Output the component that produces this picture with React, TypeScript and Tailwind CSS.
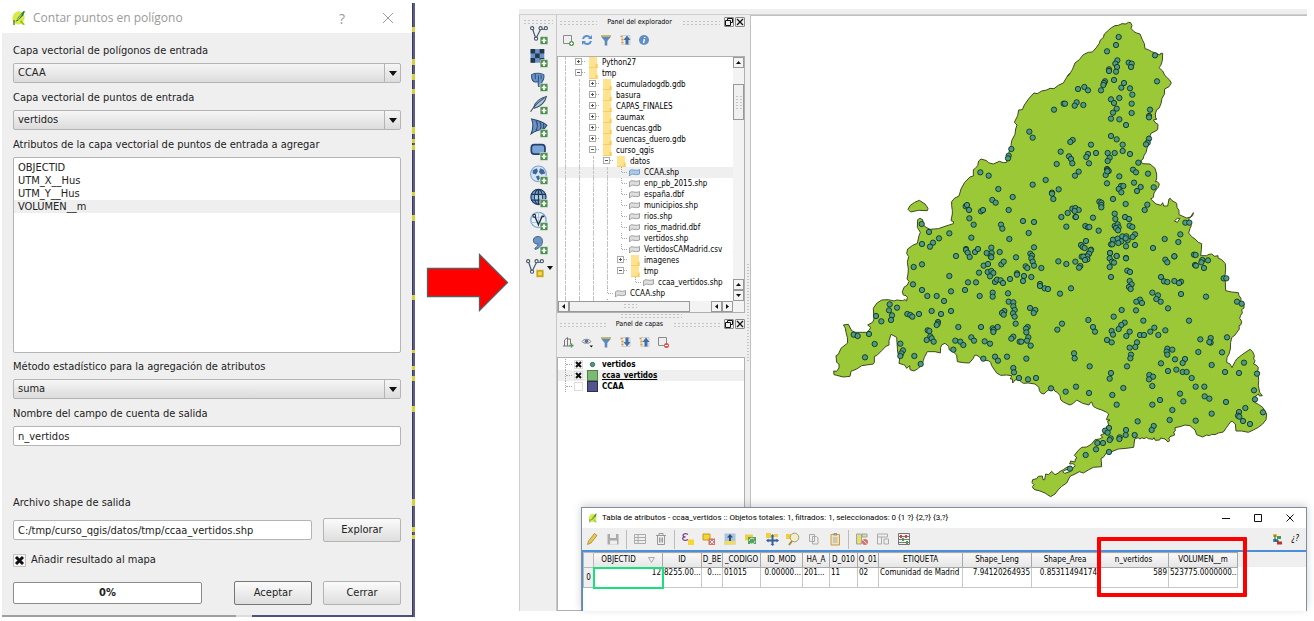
import React from "react";

const UI = "font-['DejaVu_Sans_Condensed','DejaVu_Sans',sans-serif]";

/* ---------- Map data (units of a third of a pixel, one sheet per quadrant) ---------- */

const OUTLINE: { x: number; y: number; pts: string }[] = [
  {
    x: 630,
    y: 0,
    pts: "0,246 12,243 20,244 35,240 55,230 72,220 82,203 92,190 97,182 105,162 118,152 130,137 145,130 157,129 168,117 178,103 181,93 190,86 193,75 205,64 214,56 225,50 235,49 246,44 258,45 265,40 272,41 276,50 273,58 282,68 290,72 300,75 307,92 313,104 315,119 325,122 335,128 350,134 360,138 362,133 368,133 367,155 362,170 357,176 368,186 375,200 388,212 394,222 387,233 374,240 373,256 366,268 363,284 357,298 350,302 346,315 347,328 351,330 340,333 347,342 354,346 353,362 345,367 334,372 328,385 329,397 322,415 318,430 312,440 309,450 303,455 307,464 330,465 345,478 350,495 350,510 346,518 352,518 358,525 355,535 350,540 342,552 340,565 332,570 348,585 363,589 368,581 371,591 383,591 387,570 391,568 395,574 410,583 411,595 417,605 417,617 440,627 452,624 460,611 458,620 446,629 448,640 454,650 450,658 446,672 455,683 465,690 475,700 485,704 484,722 482,740 500,740 507,736",
  },
  {
    x: 630,
    y: 720,
    pts: "515,15 524,22 534,20 534,27 545,32 556,44 557,60 555,80 557,125 575,129 595,131 597,140 603,148 602,160 612,165 612,177 605,182 607,192 602,199 599,208 605,217 603,227 597,230 598,240 585,258 575,266 572,280 571,300 567,315 561,325 560,340 570,345 576,356 585,338 590,330 605,318 615,311 630,301 638,308 643,320 641,330 645,335 641,345 648,348 655,355 653,368 659,370 655,380 656,395 655,410 659,430 667,440 658,441 655,435 645,443 639,457 655,466 668,475 675,487 680,495 678,512 668,525 655,535 640,543 625,550 605,546 588,546 586,525 577,517 572,518 560,535 550,549 535,552 525,557 515,556 508,560 500,558 488,564 470,557 465,543 458,537 450,530 435,528 420,533 405,536 406,545 401,549 404,558 390,563 386,570 390,574 384,579 375,570 362,567 359,573 346,574 342,566 339,571 325,569 320,565 312,569 306,566 300,570 294,566 284,570 281,595 258,598 235,600 215,608 200,610 190,625 183,628 184,638 185,653 160,655 145,663 130,672 118,668 105,675 90,682 80,702 65,712 55,722 45,735 32,743 22,737 15,732 0,726",
  },
  {
    x: 0,
    y: 720,
    pts: "618,723 611,720 607,713 612,707 606,701 608,692 620,689 625,682 637,681 639,692 644,692 647,675 656,677 665,667 675,677 686,672",
  },
  {
    x: 630,
    y: 720,
    pts: "57,669 70,662 83,653 92,652 94,658 86,662 78,662 68,668 74,673 90,668 98,657 106,650 99,644 89,645 92,636 105,639 106,630 111,627 103,619 115,604 125,595 140,594 155,585 165,572 178,570 188,565 182,558 195,553 202,545 198,536 206,529 203,516 210,513 199,512 206,495 200,490 185,483 170,478 160,472 155,459 150,462 147,468 128,463 110,453 100,463 90,468 80,464 70,459 62,452 60,440 52,430 45,427 40,419 30,420 20,427 12,435 4,433",
  },
  {
    x: 0,
    y: 720,
    pts: "628,425 627,415 615,405 595,402 580,403 565,392 555,393 548,402 547,390 541,390 545,380 530,378 512,379 500,372 485,350 482,340 475,335 455,333 448,323 438,318 433,320 430,328 418,342 400,341 382,338 380,318 370,309 358,303 356,292 345,283 336,287 332,295 331,312 315,308 292,308 283,325 280,335 274,350 262,360 252,366 240,362 239,350 230,358 225,349 220,347 207,343 209,327 203,310 200,265 183,256 177,275 177,288 168,292 155,305 140,320 133,322 133,340 130,345 95,350 80,360 63,367 60,382 40,384 20,379 12,377 11,366 20,367 27,357 27,345 20,340 18,320 25,316 33,298 53,282 52,265 48,250 46,237 40,228 55,226 65,245 75,250 110,250 118,243 122,235 113,228 128,220 132,210 130,178 140,163 155,153 175,152 192,156 200,153 217,155 225,152 230,156 232,145 228,140 220,138 217,128 222,115 232,108 237,97 231,90 234,75 235,60 232,40 236,22",
  },
  {
    x: 0,
    y: 0,
    pts: "234,740 230,733 233,720 248,709 262,703 267,680 271,670 262,655 263,632 270,628 278,632 280,648 288,655 300,661 325,659 345,652 370,644 371,638 363,635 367,615 367,605 365,590 365,578 373,568 387,561 393,540 404,520 420,504 430,501 430,482 436,478 443,470 446,456 453,450 470,455 475,461 490,465 508,457 520,461 530,460 537,430 543,410 545,395 555,376 557,360 561,348 553,340 563,320 566,303 577,302 583,288 597,268 612,252 622,254 635,246 650,243 660,238 672,239 685,229 700,222 710,205 720,192 630,246",
  },
];

// The last sheet ends on the northern ridge, which the first one already traces.
const outlinePath =
  "M" +
  OUTLINE.map((s, i) => {
    const list = s.pts.split(" ");
    const used = i === 0 ? list.slice(6) : i === OUTLINE.length - 1 ? list.slice(0, -1) : list;
    return used
      .map((p) => {
        const [x, y] = p.split(",").map(Number);
        return `${x + s.x},${y + s.y}`;
      })
      .join(" L");
  }).join(" L") +
  "Z";

const POINTS: { x: number; y: number; pts: string }[] = [
  {
    x: 0,
    y: 0,
    pts: "598,368 608,386 544,420 536,440 534,448 451,490 476,500 505,540 548,564 487,573 497,581 407,592 411,588 417,603 453,607 459,603 536,603 418,628 431,647 275,645 297,669 276,705 309,701 300,713 327,688 358,673 424,686 513,647 517,659 538,690 579,636 612,639 608,527 596,672 612,715 408,720 408,723 413,731 419,744 435,729 444,720 484,716 470,732 485,732 482,742 509,729 378,741 558,745 601,734 606,740",
  },
  {
    x: 0,
    y: 720,
    pts: "251,54 276,46 358,81 461,50 474,45 514,46 521,38 604,28 608,38 612,50 587,52 592,57 484,25 447,71 473,69 484,66 490,72 480,82 414,100 438,100 495,99 501,92 512,94 519,102 540,90 561,73 561,77 582,81 579,96 604,84 249,106 276,123 292,141 320,141 342,156 363,127 405,123 449,141 488,131 488,143 534,133 179,166 201,176 177,184 186,199 183,213 138,201 154,217 232,195 241,198 247,203 267,195 305,186 333,195 363,186 536,158 550,160 550,172 554,183 549,193 554,203 523,186 516,192 521,197 600,177 616,183 611,192 557,224 324,219 323,224 320,228 385,234 453,234 488,238 491,243 490,249 503,234 293,244 298,246 71,257 83,261 117,255 134,285 105,325 301,262 305,268 290,273 311,278 211,284 219,304 214,313 211,321 253,321 272,345 376,275 391,278 400,288 370,302 424,265 432,275 464,277 480,284 550,263 544,269 593,234 588,239 589,250 595,265 591,275 569,278 574,278 602,290 460,329 495,323 504,335 531,323 589,329 550,357 552,370 567,387 594,391 618,387",
  },
  {
    x: 630,
    y: 0,
    pts: "236,84 228,108 201,127 345,139 232,154 226,164 231,174 266,161 275,164 273,174 207,181 207,186 228,188 351,217 222,213 195,217 192,222 190,228 183,244 252,222 244,236 270,238 133,234 144,244 114,240 277,257 238,267 213,271 222,282 275,284 110,280 104,290 130,288 71,284 75,284 42,302 230,299 219,311 275,312 213,329 238,331 330,302 327,321 327,325 258,348 213,381 230,391 327,389 323,401 318,406 248,407 248,426 270,435 98,393 91,399 153,407 168,432 144,435 139,444 147,463 62,428 87,442 93,450 97,463 50,465 116,488 105,500 203,432 224,432 209,446 203,456 295,461 201,480 203,483 206,486 197,498 202,487 279,482 288,490 324,494 238,502 201,523 282,521 302,534 291,546 341,535 243,531 250,531 236,540 244,550 219,570 257,585 17,513 56,541 36,551 36,554 40,570 178,578 184,581 184,588 184,595 322,587 314,603 97,599 106,597 116,603 104,606 83,612 64,624 106,624 108,624 159,626 224,614 226,630 255,624 267,630 136,651 144,655 148,654 79,653 176,665 224,651 233,646 236,655 228,657 234,664 269,650 277,654 436,641 448,641 421,676 415,699 374,690 339,717 285,676 278,684 285,708 138,696 123,708 128,714 134,717 153,722 147,733 219,692 233,689 247,682 259,682 263,694 244,697 235,702 213,706 217,706 258,712 257,688 210,732 230,741 258,747 125,743 135,743 403,742 462,737 467,738",
  },
  {
    x: 630,
    y: 720,
    pts: "152,4 147,14 142,22 142,31 130,23 135,33 106,38 121,51 117,56 55,37 79,45 4,57 0,105 0,111 14,118 24,120 60,134 93,118 210,12 209,28 230,21 216,38 222,41 209,54 258,28 262,65 270,69 213,84 269,96 275,106 267,114 272,120 376,32 382,40 403,22 487,33 484,40 504,34 465,48 468,50 492,57 551,88 559,88 363,84 372,97 382,99 403,96 423,98 417,102 423,135 498,143 591,158 605,164 337,131 354,139 349,150 362,158 384,178 300,152 289,158 306,162 288,184 245,183 221,203 310,215 447,215 145,213 66,224 52,242 159,234 165,248 254,221 244,228 236,240 215,246 219,257 201,273 215,280 269,248 259,261 343,236 331,248 376,244 355,258 300,258 312,258 291,280 286,294 269,296 273,317 271,328 261,352 512,267 512,281 508,279 481,271 561,265 546,310 475,309 382,299 397,302 380,308 382,317 405,331 435,330 428,342 363,343 515,348 409,362 384,366 428,369 440,369 455,387 612,341 597,372 555,369 651,374 642,424 645,451 669,490 102,313 104,328 149,352 213,372 209,389 33,418 77,428 108,413 147,432 250,417 217,438 230,467 328,378 339,383 327,391 337,411 360,453 337,467 420,434 430,457 397,483 389,513 467,413 493,413 494,442 508,449 558,459 515,494 467,515 597,489 594,500 598,503 616,477 609,516 630,525 293,517 341,531 335,543 258,543 257,558 284,558 207,537 195,545 203,551 212,568 209,573 239,565 238,570 172,582 189,582 168,601 207,609 137,618 90,659",
  },
];

function MapCanvas() {
  return (
    <svg viewBox="-237 21 1668 1782" className="block h-auto w-full" role="img" aria-label="Mapa de vertidos">
      <g fill="#9ac837" stroke="#3a4a22" strokeWidth="3" strokeLinejoin="round">
        <path d={outlinePath} />
        <path d="M234,601 L240,590 254,580 268,574 285,585 294,598 292,605 265,604 242,609Z" />
        <path d="M1033,636 L1042,628 1050,628 1042,640Z" fill="#fff" />
      </g>
      <g fill="#4b9b86" stroke="#12301f" strokeWidth="2.6">
        {POINTS.map((s) =>
          s.pts.split(" ").map((p) => {
            const [x, y] = p.split(",").map(Number);
            return <circle key={`${s.x}-${s.y}-${p}`} cx={x + s.x} cy={y + s.y} r="8" />;
          })
        )}
      </g>
    </svg>
  );
}

/* ---------- Icons ---------- */

function QgisLogo({ className }: { className: string }) {
  return (
    <svg viewBox="0 0 16 16" className={className} aria-hidden="true">
      <ellipse cx="7.5" cy="8" rx="6" ry="6.6" fill="#dbe84a" transform="rotate(20 8 8)" />
      <path d="M10 10l4 4.5-2 .5-3-3z" fill="#8fc31f" />
      <path d="M4.500 12l2.500-4.500L12.500 1l1.500.3-1.700 4-5 5z" fill="#2f7d32" />
      <path d="M6.500 10l4-5.500" stroke="#dcf0c0" strokeWidth="0.8" />
      <path d="M3 10v5" stroke="#4a6d20" strokeWidth="1.300" />
    </svg>
  );
}

function Badge({ yellow }: { yellow?: boolean }) {
  return (
    <g>
      <rect x="10" y="11" width="7.500" height="7.500" rx="1" fill={yellow ? "#c9a516" : "#4e8f4e"} stroke="#f4f4f4" strokeWidth=".6" />
      {yellow ? <rect x="12" y="13" width="3.500" height="3.500" fill="#f0d75a" /> : <path d="M13.750 12.500v4.500M11.500 14.750h4.500" stroke="#fff" strokeWidth="1.600" />}
    </g>
  );
}

const vee = (
  <g fill="none" stroke="#44566c" strokeWidth="1.1">
    <path d="M3 4l3 9 4.5-9h4" />
    <g fill="#fff">
      <circle cx="2.5" cy="3" r="1.5" />
      <circle cx="6.2" cy="13" r="1.5" />
      <circle cx="10.5" cy="3" r="1.5" />
      <circle cx="15.5" cy="3" r="1.5" />
    </g>
  </g>
);

const sideIcons: { label: string; art: React.ReactNode; last?: boolean }[] = [
  { label: "Añadir capa vectorial", art: vee },
  {
    label: "Añadir capa ráster",
    art: (
      <g>
        <rect x="1" y="1" width="13" height="13" fill="#6b93c6" />
        <path d="M1 1h4.3v4.3H1zM9.6 1H14v4.3H9.6zM5.3 5.3h4.3v4.3H5.3zM1 9.6h4.3V14H1zM9.6 9.6H14V14H9.6z" fill="#22384f" />
      </g>
    ),
  },
  {
    label: "Añadir capa PostGIS",
    art: (
      <g fill="#6b93c6" stroke="#31547d" strokeWidth="1">
        <path d="M2 2.5c3-1.5 8-1.500 11.500 0 .5 2.500 0 5-1.500 6.500l-1 5-2.500-.5-.5-4.500-1.500.5C4 10 1.500 8 2 2.500z" />
        <path d="M5.500 2v5M8.500 3v6M11 3v4" fill="none" />
      </g>
    ),
  },
  {
    label: "Añadir capa SpatiaLite",
    art: (
      <g fill="#a9c8ea" stroke="#3d4f63" strokeWidth="1">
        <path d="M4 12C5 7 10 3 16 1.500 15 6 11 11 4.500 12.500z" />
        <path d="M1 16C4 11 9 6 14 3" fill="none" />
      </g>
    ),
  },
  {
    label: "Añadir capa MSSQL",
    art: (
      <g fill="#6b93c6" stroke="#2b476a" strokeWidth="1">
        <path d="M2 1c5 1 11 2.500 14.500 6l-3 4C10 11 6 12 1.500 15 3.500 10 4 6 2 1z" />
        <path d="M6 2.500c2 3 1.500 7 0 9.500M9.500 3.500c2 3 1.500 5.500.5 7.500M13 5c1 2 .8 4-.3 6" fill="none" />
      </g>
    ),
  },
  {
    label: "Añadir capa Oracle",
    art: <rect x="1.700" y="3.500" width="13" height="9" rx="3" fill="#7da4d6" stroke="#22426b" strokeWidth="1.600" />,
  },
  {
    label: "Añadir capa WMS",
    art: (
      <g>
        <circle cx="8.500" cy="8.500" r="7.500" fill="#d5e5f6" stroke="#7fa5cf" />
        <path d="M3 5l4-2 1 3-2 3-3-1zM10 3l3.500 1.500L15 8l-4 1-2-2zM6 11l3-1 1 3-2 2z" fill="#3f6796" />
      </g>
    ),
  },
  {
    label: "Añadir capa WCS",
    art: (
      <g>
        <circle cx="8.500" cy="8.500" r="7.200" fill="#7da4d6" stroke="#22426b" strokeWidth="1.200" />
        <path d="M1.500 6h14M1.500 11.500h14M8.500 1.500v14" stroke="#22384f" strokeWidth="1.300" />
        <ellipse cx="8.500" cy="8.500" rx="3.700" ry="7" fill="none" stroke="#22384f" />
        <path d="M5.200 6.800h2.600v3.800H5.200zM9.200 6.800h2.600v3.800H9.200z" fill="#b6d0ee" />
      </g>
    ),
  },
  {
    label: "Añadir capa WFS",
    art: (
      <g>
        <circle cx="8.500" cy="8.500" r="7.300" fill="#eaf2fb" stroke="#7fa5cf" strokeWidth="1.200" />
        <path d="M1.500 6h14M1.500 11h14M8.500 1v15" stroke="#a9c4e4" />
        <path d="M5 5l3.500 8L12 5h2" fill="none" stroke="#1f2c3a" strokeWidth="1.300" />
        <circle cx="4.500" cy="4.500" r="1.300" fill="#fff" stroke="#1f2c3a" />
      </g>
    ),
  },
  {
    label: "Añadir texto delimitado",
    art: <path d="M7 1.500c3.500-.5 5.500 1.500 5.300 5C12 10 9.500 12.500 5.500 13.800L5 12.500c2-1 3-2.300 3-4C5.500 9 3.500 7.500 3.700 5 3.800 3 5 1.800 7 1.500z" fill="#6b93c6" stroke="#31547d" strokeWidth=".8" />,
  },
  { label: "Nueva capa shape", art: vee, last: true },
];

const Funnel = () => (
  <svg viewBox="0 0 12 12" className="size-3">
    <path d="M1 2.500h10L7.300 7v4.500H4.700V7z" fill="#5b89bd" />
    <path d="M1 1.200h10v1.500H1z" fill="#b9ae4c" />
  </svg>
);
const SquareBadge = ({ tone }: { tone: string }) => (
  <svg viewBox="0 0 12 12" className="size-3" fill="none">
    <path d="M8 9.500H1.500v-8h8V8" stroke="#8a8a8a" />
    <circle cx="9.500" cy="9.500" r="2.500" fill={tone} />
    <path d={tone === "#d9534f" ? "M8 9.500h3" : "M8 9.500h3M9.500 8v3"} stroke="#fff" />
  </svg>
);
const Expand = ({ down }: { down?: boolean }) => (
  <svg viewBox="0 0 12 12" className="size-3" fill="none">
    <path d="M3 1.500h8v9H3z" fill="#ececec" stroke="#bbb" strokeWidth=".6" />
    <path d="M1.500 2.500h2M2.500 5.500h2M2.500 8.500h2" stroke="#e09a2b" strokeWidth="1.700" />
    <path d={down ? "M6.500 1.500h3V6H11.500L8 10.500 4.500 6h2z" : "M6.500 10.500h3V6h2L8 1.500 4.500 6h2z"} fill="#3f6fa8" />
  </svg>
);
const Refresh = () => (
  <svg viewBox="0 0 12 12" className="size-3" fill="none" stroke="#5b8fd0" strokeWidth="2">
    <path d="M2 5a4 4 0 0 1 7-1.500M10 7a4 4 0 0 1-7 1.500" />
    <path d="M11 1v4H7zM1 11V7h4z" fill="#5b8fd0" stroke="none" />
  </svg>
);
const Info = () => (
  <svg viewBox="0 0 12 12" className="size-3">
    <circle cx="6" cy="6" r="5" fill="#5f8ec4" />
    <path d="M6.500 5L5.500 9M6.700 3v1" stroke="#fff" strokeWidth="1.400" />
  </svg>
);
const AddGroup = () => (
  <svg viewBox="0 0 12 12" className="size-3" fill="none" stroke="#777">
    <path d="M2.500 10V4l3-2.500V10M5.500 3h3v5M1 10h7" />
    <path d="M9.500 7.500v4M7.500 9.500h4" stroke="#4e9a4e" strokeWidth="1.500" />
  </svg>
);
const Eye = () => (
  <svg viewBox="0 0 12 12" className="size-3" fill="none">
    <path d="M1 5.500C3 2.500 8 2.500 10 5.500 8 8 3 8 1 5.500z" stroke="#888" />
    <circle cx="5.500" cy="5.300" r="1.800" fill="#4b6f9c" />
    <path d="M8.500 9.500h3.500l-1.700 2z" fill="#111" />
  </svg>
);

/* ---------- Left dialog ---------- */

const FIELD = "h-5 w-full rounded-[2px] border border-[#b4b4b4] pl-1 text-[11px] text-[#222]";

function Combo({ id, label, value }: { id: string; label: string; value: string }) {
  return (
    <div className="mb-[5px]">
      <label htmlFor={id} className="mb-[2px] block h-5 leading-5">{label}</label>
      <div className="relative">
        <select id={id} defaultValue={value} className={`${FIELD} block appearance-none bg-linear-to-b from-[#f6f6f6] to-[#dcdcdc]`}>
          <option>{value}</option>
        </select>
        <span className="pointer-events-none absolute inset-y-px right-px flex w-4 items-center justify-center border-l border-[#b4b4b4]">
          <svg viewBox="0 0 8 5" className="h-[5px] w-2"><path d="M0 0h8L4 5z" fill="#111" /></svg>
        </span>
      </div>
    </div>
  );
}

const BTN = "h-[24px] rounded-[2px] border bg-linear-to-b from-[#fbfbfb] to-[#dedede] text-[11px] text-[#222]";

const MARKS: [number, number][] = [
  [24, 5], [56, 6], [71, 6], [86, 5], [124, 7], [136, 4], [142, 5], [189, 4], [212, 6], [292, 5],
  [347, 3], [363, 4], [373, 5], [403, 6], [496, 7], [524, 5], [532, 4],
];

function CountDialog() {
  return (
    <div className={`mt-[3px] flex items-stretch ${UI} text-[11px] text-[#222]`}>
      <section className="min-w-0 flex-1 bg-[#efefef]" aria-label="Contar puntos en polígono">
        <header className="flex h-[30px] items-center bg-white pr-[18px] pl-[9px] text-[#9a9a9a]">
          <QgisLogo className="size-4" />
          <h1 className="ml-[6px] flex-1 font-['Open_Sans',sans-serif] text-[12px]">Contar puntos en polígono</h1>
          <button aria-label="Ayuda" className="mr-[37px] font-['Open_Sans',sans-serif] text-[14px]">?</button>
          <button aria-label="Cerrar ventana">
            <svg viewBox="0 0 12 12" className="size-3"><path d="M1 1l10 10M11 1L1 11" stroke="#9a9a9a" /></svg>
          </button>
        </header>
        <form className="px-[11px] pt-2 pb-[10px]" onSubmit={(e) => e.preventDefault()}>
          <Combo id="poly" label="Capa vectorial de polígonos de entrada" value="CCAA" />
          <Combo id="pts" label="Capa vectorial de puntos de entrada" value="vertidos" />
          <p id="attrs" className="mb-[2px] h-5 leading-5">Atributos de la capa vectorial de puntos de entrada a agregar</p>
          <ul role="listbox" aria-labelledby="attrs" className="mb-1 h-[196px] rounded-[2px] border border-[#b4b4b4] bg-white pt-[3px] leading-[13px]">
            {["OBJECTID", "UTM_X__Hus", "UTM_Y__Hus", "VOLUMEN__m"].map((a, i) => (
              <li key={a} role="option" aria-selected={i === 3} className={i === 3 ? "bg-[#efefef] pl-1" : "pl-1"}>{a}</li>
            ))}
          </ul>
          <Combo id="method" label="Método estadístico para la agregación de atributos" value="suma" />
          <label htmlFor="count" className="mb-[2px] block h-5 leading-5">Nombre del campo de cuenta de salida</label>
          <input id="count" defaultValue="n_vertidos" className={`${FIELD} block bg-white`} />
          <label htmlFor="out" className="mt-[47px] mb-[5px] block h-5 leading-5">Archivo shape de salida</label>
          <div className="flex items-center gap-[11px]">
            <input id="out" defaultValue="C:/tmp/curso_qgis/datos/tmp/ccaa_vertidos.shp" className={`${FIELD} min-w-0 flex-1 bg-white`} />
            <button className={`${BTN} w-[78px] border-[#b4b4b4]`}>Explorar</button>
          </div>
          <label className="mt-2 flex h-5 items-center gap-[5px]">
            <span className="relative flex">
              <input type="checkbox" defaultChecked className="size-[13px] appearance-none border border-[#c4c4c4] bg-[#f6f6f6]" />
              <svg viewBox="0 0 13 13" className="pointer-events-none absolute inset-0 size-[13px]"><path d="M3 3l7 7M10 3l-7 7" stroke="#111" strokeWidth="3" /></svg>
            </span>
            Añadir resultado al mapa
          </label>
          <div className="mt-[11px] flex items-center">
            <div role="progressbar" aria-valuenow={0} aria-label="Progreso" className="flex h-[22px] w-[189px] items-center justify-center rounded-[2px] border border-[#8c8c8c] bg-white font-bold">0%</div>
            <button className={`${BTN} ml-auto w-[78px] border-[#777]`}>Aceptar</button>
            <button className={`${BTN} ml-[11px] w-[78px] border-[#b4b4b4]`}>Cerrar</button>
          </div>
        </form>
        <div className="flex h-[2px]">
          <span className="w-[57%] bg-[#a0a0a0]" />
          <span className="w-[4%] bg-[#dcdcdc]" />
          <span className="flex-1 bg-[#50507e]" />
        </div>
      </section>
      <svg viewBox="0 0 3 614" preserveAspectRatio="none" className="w-[3px] self-stretch" aria-hidden="true">
        <rect width="3" height="614" fill="#5b5b8c" />
        <rect width="1" height="614" fill="#3b3b5c" />
        {MARKS.map(([y, h]) => <rect key={y} y={y} width="3" height={h} fill="#d6d13a" />)}
      </svg>
    </div>
  );
}

/* ---------- Dock panels ---------- */

const DOTS = "bg-[radial-gradient(#c4c4c4_1px,transparent_1px)] bg-[size:4px_3px]";

function DockTitle({ title }: { title: string }) {
  return (
    <div className="flex h-3 items-center gap-1 pl-[2px]">
      <span className={`h-[5px] flex-1 ${DOTS}`} />
      <h2 className="px-[6px] text-[7px] leading-3 text-black">{title}</h2>
      <span className={`h-[5px] flex-1 ${DOTS}`} />
      <span className="flex gap-px">
        <button aria-label="Flotar" className="size-[10px] rounded-[1px] border border-[#888]">
          <svg viewBox="0 0 8 8" className="size-2" fill="none" stroke="#111"><path d="M2.500 2.500v-2h5v4h-2M.5 2.500h5v5h-5z" /></svg>
        </button>
        <button aria-label="Cerrar panel" className="size-[10px] rounded-[1px] border border-[#888]">
          <svg viewBox="0 0 8 8" className="size-2" stroke="#111" strokeWidth="1.300"><path d="M1 1l6 6M7 1L1 7" /></svg>
        </button>
      </span>
    </div>
  );
}

type Node = { t: string; d: number; k: "+" | "-" | "f"; g: boolean[]; sel?: boolean };
const T = true;
const F = false;
const TREE: Node[] = [
  { t: "Python27", d: 0, k: "+", g: [T] },
  { t: "tmp", d: 0, k: "-", g: [T] },
  ...["acumuladogdb.gdb", "basura", "CAPAS_FINALES", "caumax", "cuencas.gdb", "cuencas_duero.gdb"].map((t): Node => ({ t, d: 1, k: "+", g: [T, T] })),
  { t: "curso_qgis", d: 1, k: "-", g: [T, T] },
  { t: "datos", d: 2, k: "-", g: [T, T, T] },
  { t: "CCAA.shp", d: 3, k: "f", g: [T, T, T, T], sel: true },
  ...["enp_pb_2015.shp", "españa.dbf", "municipios.shp", "rios.shp", "rios_madrid.dbf", "vertidos.shp", "VertidosCAMadrid.csv"].map((t): Node => ({ t, d: 3, k: "f", g: [T, T, T, T] })),
  { t: "imagenes", d: 3, k: "+", g: [T, T, T, T] },
  { t: "tmp", d: 3, k: "-", g: [T, T, T, T] },
  { t: "ccaa_vertidos.shp", d: 4, k: "f", g: [T, T, T, T, F] },
  { t: "CCAA.shp", d: 2, k: "f", g: [T, T, T] },
  { t: "", d: 2, k: "f", g: [T, T, T] },
];

function TreeRow({ n }: { n: Node }) {
  return (
    <li className={`flex h-[11px] items-center ${n.sel ? "bg-[#efefef]" : ""}`}>
      {n.g.map((on, i) => (
        <span key={i} className="flex h-full w-[14px] shrink-0 justify-center">
          {on && <span className="h-full border-l border-dashed border-[#c4c4c4]" />}
        </span>
      ))}
      <svg viewBox="0 0 14 11" className="h-[11px] w-[14px] shrink-0" fill="none" stroke="#aaa">
        {n.k === "f" ? (
          <path d="M7.500 0v5.500H14" strokeDasharray="1 1" />
        ) : (
          <>
            <rect x="3.500" y="1.500" width="6" height="6" fill="#fff" />
            <path d={n.k === "+" ? "M5 4.500h3M6.500 3v3" : "M5 4.500h3"} stroke="#555" />
            <path d="M10 4.500h4" strokeDasharray="1 1" />
          </>
        )}
      </svg>
      {n.k === "f" ? (
        <svg viewBox="0 0 16 11" className="h-[11px] w-4 shrink-0">
          <path d="M1.500 9V4c1-2 3.500-1 5.500-.8s3 0 4.500-.7v4.500c-2 .8-4 .8-5.500.3S3 7 1.500 9z" fill={n.sel ? "#a9cbea" : "#dedede"} stroke={n.sel ? "#5f8fbd" : "#8c8c8c"} strokeWidth=".8" />
        </svg>
      ) : (
        <svg viewBox="0 0 16 11" className="h-[11px] w-4 shrink-0">
          <path d="M3 0h8v6.500l.500.5v4H3z" fill="#ffe390" />
          <path d="M9.500 7.500l2-1V11h-2z" fill="#f7cd55" />
          <path d="M3 10.500h8.500" stroke="#f3d06a" strokeWidth="1" />
        </svg>
      )}
      <span className="leading-[11px] whitespace-nowrap text-black">{n.t}</span>
    </li>
  );
}

function ScrollButton({ d, label }: { d: string; label: string }) {
  return (
    <button aria-label={label} className="flex size-[11px] shrink-0 items-center justify-center border border-[#999] bg-[#f4f4f4]">
      <svg viewBox="0 0 5 5" className="size-[5px]"><path d={d} fill="#111" /></svg>
    </button>
  );
}

function Layer({ name, art, on, active }: { name: string; art: React.ReactNode; on: boolean; active?: boolean }) {
  return (
    <li className={`flex h-[11px] items-center ${active ? "bg-[#efefef]" : ""}`}>
      <span className="ml-[7px] h-full border-l border-dotted border-[#aaa]" />
      <span className="w-[6px] border-t border-dotted border-[#aaa]" />
      <label className="flex items-center">
        <span className="relative ml-[2px] flex">
          <input type="checkbox" defaultChecked={on} className="size-[9px] appearance-none border border-[#ddd] bg-white" />
          {on && <svg viewBox="0 0 9 9" className="pointer-events-none absolute inset-0 size-[9px]"><path d="M2 2l5 5M7 2L2 7" stroke="#111" strokeWidth="2.200" /></svg>}
        </span>
        <svg viewBox="0 0 11 11" className="ml-1 size-[11px]">{art}</svg>
        <span className={`ml-1 text-[8px] font-bold text-black ${active ? "underline" : ""}`}>{name}</span>
      </label>
    </li>
  );
}

function Docks() {
  return (
    <div className={`flex w-[190px] shrink-0 flex-col border-l border-[#c8c8c8] bg-[#efefef] pr-px ${UI} text-[8px]`}>
      <div className="h-px" />
      <DockTitle title="Panel del explorador" />
      <div className="flex h-[28px] items-center gap-[7px] pb-1 pl-[5px]">
        <SquareBadge tone="#4e9a4e" /><Refresh /><Funnel /><Expand /><Info />
      </div>
      <div className="border border-[#b0b0b0] bg-white">
        <div className="flex">
          <ul className="h-[244px] min-w-0 flex-1 overflow-hidden">
            {TREE.map((n, i) => <TreeRow key={i} n={n} />)}
          </ul>
          <div className="flex w-[11px] flex-col bg-[#f3f3f3]">
            <ScrollButton label="Subir" d="M0 4l2.500-3L5 4z" />
            <div className="h-4" />
            <div className="flex h-9 items-center justify-center border border-[#999] bg-[#f0f0f0]">
              <span className={`h-[14px] w-[7px] ${DOTS}`} />
            </div>
            <div className="flex-1" />
            <ScrollButton label="Subir una línea" d="M0 4l2.500-3L5 4z" />
            <ScrollButton label="Bajar" d="M0 1l2.500 3L5 1z" />
          </div>
        </div>
        <div className="flex h-[11px] bg-[#f3f3f3] pr-[11px]">
          <ScrollButton label="Izquierda" d="M4 0v5L1 2.500z" />
          <div className="flex w-[121px] items-center justify-center border border-[#999] bg-[#f0f0f0]">
            <span className={`h-[7px] w-[14px] ${DOTS}`} />
          </div>
          <div className="flex-1" />
          <ScrollButton label="Izquierda una columna" d="M4 0v5L1 2.500z" />
          <ScrollButton label="Derecha" d="M1 0v5l3-2.500z" />
        </div>
      </div>
      <div className={`mx-auto h-[5px] w-[62px] ${DOTS}`} />
      <DockTitle title="Panel de capas" />
      <div className="flex h-[27px] items-center gap-[7px] pb-[3px] pl-[5px]">
        <AddGroup /><Eye /><Funnel /><Expand down /><Expand /><SquareBadge tone="#d9534f" />
      </div>
      <ul className="flex-1 border border-[#b0b0b0] bg-white pt-px">
        <Layer name="vertidos" on art={<circle cx="5.500" cy="5.500" r="2.200" fill="#4b9b86" stroke="#1f4a3c" strokeWidth=".7" />} />
        <Layer name="ccaa_vertidos" on active art={<rect x=".5" y=".5" width="10" height="10" fill="#7cb972" stroke="#50804a" />} />
        <Layer name="CCAA" on={false} art={<rect x=".5" y=".5" width="10" height="10" fill="#54548c" stroke="#2c2c55" />} />
      </ul>
    </div>
  );
}

/* ---------- Attribute table ---------- */

const COLS: { h: string; v: string; w: string; left?: boolean }[] = [
  { h: "OBJECTID", v: "12", w: "w-[69px]" },
  { h: "ID", v: "8255.00...", w: "w-[39px]" },
  { h: "D_BE", v: "0....", w: "w-[21px]" },
  { h: "_CODIGO", v: "01015", w: "w-[38px]", left: true },
  { h: "ID_MOD", v: "0.00000...", w: "w-[42px]" },
  { h: "HA_A", v: "201...", w: "w-[27px]", left: true },
  { h: "D_010", v: "11", w: "w-[28px]", left: true },
  { h: "O_01", v: "02", w: "w-[21px]", left: true },
  { h: "ETIQUETA", v: "Comunidad de Madrid", w: "w-[84px]", left: true },
  { h: "Shape_Leng", v: "7.94120264935", w: "w-[69px]" },
  { h: "Shape_Area", v: "0.85311494174", w: "w-[67px]" },
  { h: "n_vertidos", v: "589", w: "w-[70px]" },
  { h: "VOLUMEN__m", v: "523775.0000000...", w: "w-[69px]" },
];

const Rule = () => <span className="-mx-px h-[19px] border-l border-[#bbb]" />;
const TI = "size-[14px] shrink-0";

function TableTools() {
  return (
    <div className="flex h-[22px] items-center gap-[7px] bg-[#efefef] pl-[3px]">
      <svg viewBox="0 0 14 14" className={TI}><path d="M2.500 12.500l1-3.500L9.500 1.500l2.500 2L6 11z" fill="#ecc94b" stroke="#96792a" strokeWidth=".7" /></svg>
      <svg viewBox="0 0 14 14" className={TI}><path d="M1.500 2h11v10.500h-11z" fill="#aaa" /><path d="M4 2h6v4H4zM4 8.500h7v4H4z" fill="#eee" /></svg>
      <Rule />
      <svg viewBox="0 0 14 14" className={TI} fill="none" stroke="#aaa"><path d="M1.500 2.500h11v9h-11zM1.500 5.500h11M1.500 8.500h11M5 2.500v9" /></svg>
      <svg viewBox="0 0 14 14" className={TI} fill="none" stroke="#999"><path d="M2 3.500h10M5 3V1.500h4V3M3.500 4v8.500h7V4M5.500 5.500v5M7 5.500v5M8.500 5.500v5" /></svg>
      <Rule />
      <svg viewBox="0 0 14 14" className={TI}><path d="M7 2.500C4.500 1 2 1.800 2 3.300c0 1.200 1 1.500 2.500 1.500C3 4.800 1.500 5.500 1.700 7c.2 1.600 3.300 2 5.300.5" fill="none" stroke="#7a4a86" strokeWidth="1.300" /><path d="M7 7.500h6V13H7z" fill="#f5d733" /></svg>
      <svg viewBox="0 0 14 14" className={TI}><path d="M1 2h7v6H1z" fill="#f5d733" stroke="#c29c1b" /><path d="M6.500 6.500h6.500V13H6.500z" fill="#d9706c" /><path d="M8 8l4 4M12 8l-4 4" stroke="#fff" /></svg>
      <svg viewBox="0 0 14 14" className={TI}><path d="M1.500 1.500h11v11h-11z" fill="#a9c4e0" /><path d="M1.500 9h11v3.500h-11z" fill="#f2dc5a" /><path d="M7 2l3 3.500H8V9H6V5.500H4z" fill="#29507c" /></svg>
      <svg viewBox="0 0 14 14" className={TI}><path d="M1 2.500h8v6H1z" fill="#f0cf3c" /><path d="M4 5h8v7H4z" fill="#57a05c" /><path d="M5 9a3 3 0 0 1 5-2M11 9a3 3 0 0 1-5 2" stroke="#d9f0da" fill="none" /></svg>
      <svg viewBox="0 0 14 14" className={TI}><path d="M1 1h5v5H1z" fill="#f0cf3c" /><path d="M7.500 2l2 2.500h-1v3h3v-1L14 8.500l-2.500 2v-1h-3V12h1l-2 2-2-2h1V9.500h-3v1L1 8.500l2.500-2v1h3v-3h-1z" fill="#35609a" /><path d="M9 2h4v3H9z" fill="#f0cf3c" /></svg>
      <svg viewBox="0 0 14 14" className={TI}><path d="M0 2h5v5H0z" fill="#f0cf3c" /><circle cx="8.500" cy="5.500" r="4.300" fill="#f7eec0" stroke="#9a9a9a" /><path d="M6 9l-3 4" stroke="#a98a2c" strokeWidth="2" /></svg>
      <svg viewBox="0 0 14 14" className={TI} fill="#eee" stroke="#aaa"><path d="M2.500 2.500h5v7h-5zM5.500 4.500h4l1.500 1.500v6H5.500z" /></svg>
      <svg viewBox="0 0 14 14" className={TI}><path d="M3 2.500h8.500V13H3z" fill="#f3e3b8" stroke="#c49b47" /><path d="M5.500 1h3.500v2.500H5.500z" fill="#999" /><path d="M5 6h4.500M5 8h4.500M5 10h4.500" stroke="#aaa" /></svg>
      <Rule />
      <svg viewBox="0 0 14 14" className={TI}><path d="M1.500 2h5v10h-5zM7 2h5v3H7z" fill="#f2dc5a" stroke="#8aa8c8" /><circle cx="10" cy="10" r="3" fill="#d9706c" /><path d="M8.500 8.500l3 3" stroke="#fff" /></svg>
      <svg viewBox="0 0 14 14" className={TI} fill="none" stroke="#aaa"><path d="M1.500 2h10v3h-10zM1.500 5v7h4V5M8 7h4.500v5H8z" /></svg>
      <svg viewBox="0 0 14 14" className={TI} fill="none"><path d="M1.500 1.500h11v11h-11z" fill="#f1f1f1" stroke="#777" /><path d="M2 4.500h10M2 7.500h10M2 10.500h10" stroke="#777" /><path d="M4 3v3M9 3v3" stroke="#c44" strokeWidth="2" /><path d="M6 6v3M10 9v3" stroke="#4a9a4a" strokeWidth="2" /></svg>
      <svg viewBox="0 0 14 14" className={`${TI} ml-auto`}><path d="M3 2h4v3H3z" fill="#e3bd2a" /><path d="M7 4h4v3H7z" fill="#4a9a4a" /><path d="M3 7h5v3H3z" fill="#2f9dc0" /><path d="M7 9.500h5v3H7z" fill="#b33" /><path d="M5 3v6h4" stroke="#345" fill="none" /></svg>
      <button aria-label="Ayuda" className="mr-[7px] text-[8px] italic">¿?</button>
    </div>
  );
}

function AttributeWindow() {
  return (
    <section className={`absolute right-0 bottom-0 left-[62px] flex h-[104px] flex-col border border-b-0 border-[#7d8fa3] bg-white shadow-[0_-2px_8px_rgba(0,0,0,0.18)] ${UI}`}>
      <header className="flex h-[20px] items-center pr-3 pl-[6px]">
        <QgisLogo className="size-[10px]" />
        <h2 className="ml-1 flex-1 font-['Roboto',sans-serif] text-[8px] whitespace-nowrap text-black">
          Tabla de atributos - ccaa_vertidos :: Objetos totales: 1, filtrados: 1, seleccionados: 0 {"{1 ?} {2,?} {3,?}"}
        </h2>
        <div className="flex items-center gap-6">
          <button aria-label="Minimizar"><svg viewBox="0 0 8 8" className="size-2"><path d="M0 4.500h8" stroke="#111" /></svg></button>
          <button aria-label="Maximizar"><svg viewBox="0 0 8 8" className="size-2" fill="none"><path d="M.5.5h7v7h-7z" stroke="#111" /></svg></button>
          <button aria-label="Cerrar tabla"><svg viewBox="0 0 8 8" className="size-2"><path d="M.5.5l7 7M7.500.5l-7 7" stroke="#111" /></svg></button>
        </div>
      </header>
      <TableTools />
      <div className="min-h-0 flex-1 overflow-hidden border-t-2 border-l border-[#4a90d9] bg-[linear-gradient(#efefef_15px,transparent_15px)]">
        <table className="w-[654px] table-fixed border-collapse text-[8px] text-black">
          <thead>
            <tr className="h-[15px]">
              <th className="w-[10px] border border-[#b8b8b8] bg-[#efefef]" aria-label="Fila" />
              {COLS.map((c, i) => (
                <th key={c.h} className={`${c.w} border border-[#a8a8a8] bg-linear-to-b from-[#f8f8f8] to-[#e6e6e6] p-0 font-normal`}>
                  <span className="flex items-center justify-center overflow-hidden leading-3 whitespace-nowrap">
                    {c.h}
                    {i === 0 && <svg viewBox="0 0 7 6" className="ml-3 h-[6px] w-[7px]" fill="none" stroke="#aaa"><path d="M.5.5h6l-3 5z" /></svg>}
                  </span>
                </th>
              ))}
            </tr>
          </thead>
          <tbody>
            <tr className="h-[20px] align-top">
              <th className="border border-[#b8b8b8] bg-[#efefef] p-0 align-middle font-normal">0</th>
              {COLS.map((c, i) => (
                <td
                  key={c.h}
                  className={`overflow-hidden border border-[#c8c8c8] px-px py-0 leading-[10px] whitespace-nowrap ${c.left ? "text-left" : "text-right"} ${i === 0 ? "outline-2 -outline-offset-1 outline-[#19e07c]" : ""}`}
                >
                  {c.v}
                </td>
              ))}
            </tr>
          </tbody>
        </table>
      </div>
      <div className="pointer-events-none absolute top-[29px] right-[59px] h-[60px] w-[150px] rounded-[1px] border-4 border-[#ff0000]" />
    </section>
  );
}

function QgisWindow() {
  return (
    <main className="relative mt-[9px] flex min-h-[602px] flex-col bg-[#efefef]">
      <div className="h-[6px] shrink-0 border-b border-[#cfcfcf]" />
      <div className="flex flex-1">
        <nav aria-label="Capas" className="flex w-[37px] shrink-0 flex-col items-center border-l border-[#cfcfcf]">
          <span className={`mt-1 h-[5px] w-[30px] ${DOTS}`} />
          <div className="mt-px flex h-[253px] flex-col justify-between pl-[2px]">
            {sideIcons.map((s) => (
              <button key={s.label} aria-label={s.label} className="relative block size-5">
                <svg viewBox="0 0 18 19" className={s.last ? "-ml-1 size-5" : "size-5"}>{s.art}<Badge yellow={s.last} /></svg>
                {s.last && <svg viewBox="0 0 6 4" className="absolute top-2 left-[18px] h-1 w-[6px]"><path d="M0 0h6L3 4z" fill="#111" /></svg>}
              </button>
            ))}
          </div>
        </nav>
        <Docks />
        <div className="flex w-[4px] shrink-0 flex-col justify-center"><span className={`h-[100px] w-[4px] ${DOTS}`} /></div>
        <div className="min-w-0 flex-1 border-t border-l border-[#c0c0c0] bg-white">
          <MapCanvas />
        </div>
      </div>
      <AttributeWindow />
    </main>
  );
}

export default function App() {
  return (
    <div className="grid min-h-screen grid-cols-[413fr_104fr_788fr] items-start bg-white pr-[7px] pl-[2px]">
      <CountDialog />
      <div className="flex justify-center pt-[253px]">
        <svg viewBox="0 0 83 59" className="h-[59px] w-[83px]" role="img" aria-label="Resultado">
          <path d="M1.500 15.500h52v-14l28 28-28 28v-14h-52z" fill="#ff0000" stroke="#5c5c5c" strokeWidth="1.300" />
        </svg>
      </div>
      <QgisWindow />
    </div>
  );
}
